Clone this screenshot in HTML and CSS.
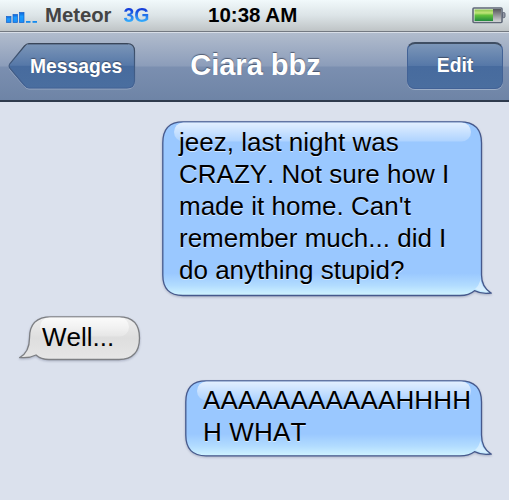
FILE: index.html
```
<!DOCTYPE html>
<html lang="en">
<head>
    <meta charset="UTF-8">
    <title>Messages</title>
    <link rel="stylesheet" href="styles.css">
</head>
<body>
    <!-- Status bar -->
    <div class="status">
        <div class="carrier">
            <svg class="signal" width="31" height="12" viewBox="0 0 31 12">
                <defs>
                    <linearGradient id="bars" x1="0" y1="0" x2="0" y2="1">
                        <stop offset="0" stop-color="#1164d8"/>
                        <stop offset=".4" stop-color="#1a9cff"/>
                        <stop offset="1" stop-color="#1a8cf5"/>
                    </linearGradient>
                </defs>
                <rect x="0.5" y="4.5" width="4.500" height="6" fill="url(#bars)" stroke="#1262cc" stroke-width=".7"/>
                <rect x="7" y="2.5" width="4.500" height="8" fill="url(#bars)" stroke="#1262cc" stroke-width=".7"/>
                <rect x="13.5" y="0.5" width="4.500" height="10" fill="url(#bars)" stroke="#1262cc" stroke-width=".7"/>
                <rect x="20" y="9" width="4.5" height="1.8" fill="#168aed"/>
                <rect x="26.500" y="9" width="4.5" height="1.8" fill="#168aed"/>
            </svg>
            <span class="name">Meteor</span>
            <span class="network">3G</span>
        </div>
        <div class="time">10:38 AM</div>
        <svg class="battery" width="34" height="17" viewBox="0 0 34 17">
            <defs>
                <linearGradient id="charge" x1="0" y1="0" x2="0" y2="1">
                    <stop offset="0" stop-color="#8ac64c"/>
                    <stop offset=".3" stop-color="#c1e579"/>
                    <stop offset=".5" stop-color="#62c13b"/>
                    <stop offset="1" stop-color="#218b3e"/>
                </linearGradient>
                <linearGradient id="empty" x1="0" y1="0" x2="0" y2="1">
                    <stop offset="0" stop-color="#55565a"/>
                    <stop offset="1" stop-color="#d2d3d6"/>
                </linearGradient>
            </defs>
            <rect x="1" y="1" width="29" height="14.5" rx="1" fill="#e4ebe2" stroke="#606878" stroke-width="1.6"/>
            <rect x="21" y="2" width="8" height="12.5" fill="url(#empty)"/>
            <rect x="2.5" y="2.5" width="18.5" height="11.5" fill="url(#charge)"/>
            <path d="M30.5 5.5h1.2q1.3 0 1.3 1.3v2.6q0 1.3-1.3 1.3h-1.2z" fill="#969ba8" stroke="#606878"/>
        </svg>
    </div>

    <!-- Nav bar -->
    <div class="nav">
        <div class="back">
            <svg class="shape" width="130" height="50" viewBox="0 0 130 50">
                <defs>
                    <linearGradient id="btn" x1="0" y1="0" x2="0" y2="1">
                        <stop offset="0" stop-color="#7c96b8"/>
                        <stop offset=".49" stop-color="#5678a8"/>
                        <stop offset=".51" stop-color="#476b9e"/>
                        <stop offset="1" stop-color="#4a6e9f"/>
                    </linearGradient>
                    <linearGradient id="btnEdge" x1="0" y1="0" x2="0" y2="1">
                        <stop offset="0" stop-color="#3a4658"/>
                        <stop offset=".3" stop-color="#3f5574"/>
                        <stop offset="1" stop-color="#426296"/>
                    </linearGradient>
                </defs>
                <path transform="translate(0 1)" d="M21 1.5H119Q126.500 1.500 126.500 9V38.500Q126.500 46 119 46H21Q18.500 46 16.500 43.500L2 27Q.3 24 2 21.500L16.500 4Q18.500 1.500 21 1.500Z" fill="none" stroke="#a3b2c9" stroke-opacity=".8"/>
                <path d="M21 1.500H119Q126.500 1.500 126.500 9V38.500Q126.500 46 119 46H21Q18.500 46 16.500 43.500L2 26.500Q.3 24 2 21.500L16.500 4Q18.500 1.500 21 1.500Z" fill="url(#btn)" stroke="url(#btnEdge)" stroke-width="1.2"/>
                <path d="M20 2.200H120" stroke="#3c4a60" stroke-width="1" opacity=".6"/>
            </svg>
            <span class="label">Messages</span>
        </div>
        <div class="title">Ciara bbz</div>
        <div class="edit">Edit</div>
    </div>

    <!-- Conversation -->
    <div class="chat">
        <div class="bubble sent first">
            <svg class="shape" width="330" height="180" viewBox="0 0 330 180">
                <defs>
                    <linearGradient id="blue1" gradientUnits="userSpaceOnUse" x1="0" y1="0" x2="0" y2="175">
                        <stop offset="0" stop-color="#9ac8ff"/>
                        <stop offset=".87" stop-color="#9ac8ff"/>
                        <stop offset=".94" stop-color="#b2dcff"/>
                        <stop offset="1" stop-color="#d3f6ff"/>
                    </linearGradient>
                    <linearGradient id="gloss" x1="0" y1="0" x2="0" y2="1">
                        <stop offset="0" stop-color="#fff" stop-opacity=".72"/>
                        <stop offset="1" stop-color="#fff" stop-opacity=".2"/>
                    </linearGradient>
                </defs>
                <path d="M21 .8H298Q319.500 .8 319.500 22V154Q319.500 166 329 172Q320 173.500 312.500 169.700Q307 174.500 298 174.500H21Q.8 174.500 .8 154V22Q.8 .8 21 .8Z" fill="url(#blue1)" stroke="#46598c" stroke-width="1.3"/>
                <rect x="12" y="1.500" width="297" height="19" rx="9.500" fill="url(#gloss)"/>
                <path d="M318.500 158Q319 165.500 326 171Q320 171 313 168Q317 165 318.500 158Z" fill="#e3f4ff" opacity=".7"/>
            </svg>
            <div class="text">jeez, last night was<br>CRAZY. Not sure how I<br>made it home. Can't<br>remember much... did I<br>do anything stupid?</div>
        </div>

        <div class="bubble received">
            <svg class="shape" width="123" height="48" viewBox="0 0 123 48">
                <defs>
                    <linearGradient id="grey" x1="0" y1="0" x2="0" y2="1">
                        <stop offset="0" stop-color="#eeeeee"/>
                        <stop offset=".5" stop-color="#dedede"/>
                        <stop offset="1" stop-color="#e6e6e6"/>
                    </linearGradient>
                </defs>
                <path d="M32 .8H100Q120.500 .8 120.500 22T100 43.500H30Q22 43.500 17 39Q10 42.500 .8 41.500Q10.500 36 10.500 22Q10.500 .8 32 .8Z" fill="url(#grey)" stroke="#7d7f83" stroke-width="1.300"/>
                <rect x="21" y="1.500" width="89" height="19" rx="9.500" fill="url(#gloss)"/>
            </svg>
            <div class="text">Well...</div>
        </div>

        <div class="bubble sent second">
            <svg class="shape" width="307" height="82" viewBox="0 0 307 82">
                <defs>
                    <linearGradient id="blue2" gradientUnits="userSpaceOnUse" x1="0" y1="0" x2="0" y2="77">
                        <stop offset="0" stop-color="#9ac8ff"/>
                        <stop offset=".7" stop-color="#9ac8ff"/>
                        <stop offset=".86" stop-color="#b2dcff"/>
                        <stop offset="1" stop-color="#d3f6ff"/>
                    </linearGradient>
                </defs>
                <path d="M21 .8H275Q296.500 .8 296.500 22V55Q296.500 68 306 74Q297 75.500 289.500 71.700Q284 75.800 275 75.800H21Q.8 75.800 .8 55V22Q.8 .8 21 .8Z" fill="url(#blue2)" stroke="#46598c" stroke-width="1.300"/>
                <rect x="12" y="1.500" width="274" height="19" rx="9.500" fill="url(#gloss)"/>
                <path d="M295.500 60Q296 67.500 303 73Q297 73 290 70Q294 67 295.500 60Z" fill="#e3f4ff" opacity=".7"/>
            </svg>
            <div class="text shout">AAAAAAAAAAAHHHH<br>H WHAT</div>
        </div>
    </div>
</body>
</html>
```
FILE: styles.css
```
* {
    box-sizing: border-box;
}
body {
    margin: 0;
    width: 509px;
    height: 500px;
    overflow: hidden;
    font-family: "Liberation Sans", Arial, sans-serif;
    background-color: #dbe1ed;
}
svg {
    display: block;
}

/* status bar */
.status {
    display: grid;
    grid-template-columns: 202px auto 1fr;
    align-items: center;
    height: 32px;
    padding: 0 3px 1px 6px;
    background: linear-gradient(#f1f9fb, #dce4e7 50%, #bfc4c6);
    border-bottom: 1px solid #737981;
    font-size: 20.3px;
    font-weight: bold;
}
.carrier {
    display: flex;
    align-items: center;
}
.signal {
    margin-top: 6px;
}
.name {
    margin-left: 8px;
    color: #444;
}
.network {
    margin-left: 12px;
    background: linear-gradient(#1238d8 20%, #35b4ff 80%);
    -webkit-background-clip: text;
    background-clip: text;
    color: transparent;
    font-size: 19.5px;
}
.time {
    color: #000;
    font-size: 20.5px;
}
.battery {
    justify-self: end;
    margin-top: 1px;
}

/* nav bar */
.nav {
    display: grid;
    grid-template-columns: 1fr auto 1fr;
    align-items: center;
    height: 70px;
    padding: 0 6px 2px 8px;
    background: linear-gradient(#b1bccd, #8c9dba 49%, #7b8fb0 51%, #6e84a6);
    border-top: 1px solid #d8dee7;
    border-bottom: 2px solid #2f3b4d;
    color: #fff;
    font-weight: bold;
    text-shadow: 0 -1px 1px rgba(50, 60, 80, 0.7);
}
.back {
    position: relative;
    width: 128px;
    height: 48px;
}
.shape {
    position: absolute;
    left: 0;
    top: 0;
}
.label {
    position: relative;
    display: block;
    padding-left: 22px;
    font-size: 19.3px;
    line-height: 50px;
}
.title {
    font-size: 29px;
}
.edit {
    justify-self: end;
    width: 96px;
    height: 47px;
    border: 1px solid #426296;
    border-top: 2px solid #3f4e63;
    border-radius: 8px;
    background: linear-gradient(#7c96b8, #5678a8 49%, #476b9e 51%, #4a6e9f);
    box-shadow: 0 1px 0 #9caec7;
    font-size: 19.3px;
    line-height: 44px;
    text-align: center;
}

/* conversation */
.chat {
    display: flex;
    flex-direction: column;
    padding: 19px 17px 0 19px;
}
.bubble {
    position: relative;
}
.bubble .shape {
    filter: drop-shadow(0 1px 1px rgba(80, 90, 120, 0.35));
}
.text {
    position: relative;
    font-size: 26px;
    line-height: 32px;
    white-space: nowrap;
    font-kerning: none;
    color: #000;
}
.shout {
    letter-spacing: 0.15px;
}
.sent {
    align-self: flex-end;
}
.sent .text {
    text-shadow: 0 1px 0 rgba(255, 255, 255, 0.6);
}
.first {
    width: 330px;
    height: 175px;
    padding: 5px 0 0 17px;
}
.received {
    width: 123px;
    height: 44px;
    margin-top: 20px;
    padding: 5px 0 0 23px;
}
.second {
    width: 307px;
    height: 77px;
    margin-top: 20px;
    padding: 4px 0 0 18px;
}
```
